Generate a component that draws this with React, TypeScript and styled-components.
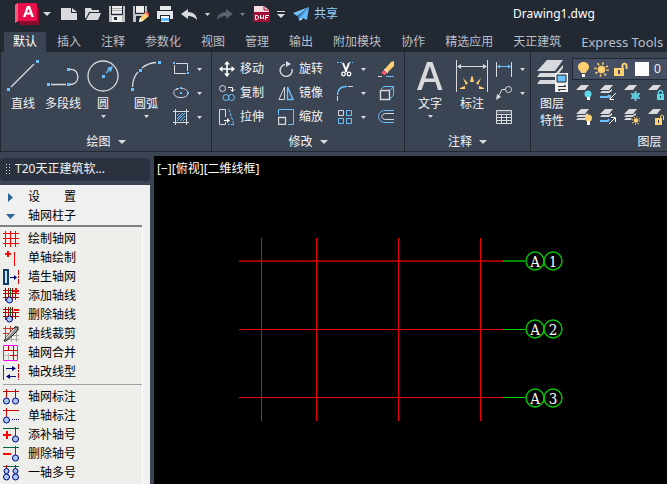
import React from "react";
import styled, { createGlobalStyle } from "styled-components";

const Global = createGlobalStyle`
  * { box-sizing: border-box; }
  body { margin: 0; background: #000; overflow: hidden; }
  body, button, select, input { font-family: "Noto Sans", "Noto Sans CJK SC", sans-serif; font-size: 12px; }
  button { border: 0; background: none; padding: 0; color: inherit; line-height: 16px; white-space: nowrap; }
  svg { display: block; flex: none; }
`;

const INK = "#d9dade";
const BLUE = "#6bc0ff";
const GOLD = "#ffd071";
const CYAN = "#5fd9e8";
const PANEL = "#3b4453";

const Shell = styled.div`
  height: 100vh;
  display: flex;
  flex-direction: column;
  overflow: hidden;
  background: ${PANEL};
`;
const TitleBar = styled.header`
  flex: none;
  height: 28px;
  display: grid;
  grid-template-columns: 513fr 154fr;
  align-items: center;
  background: #222933;
  color: #fff;
`;
const QuickAccess = styled.div`
  display: flex;
  align-items: center;
  padding-left: 15px;
`;
const QuickButton = styled.button<{ $gap?: number }>`
  display: flex;
  align-items: center;
  gap: 4px;
  margin-left: ${(p) => p.$gap ?? 8}px;
`;
const Share = styled(QuickButton)`
  gap: 5px;
  color: #8fd0ff;
`;
const DocTitle = styled.h1`
  margin: 0;
  font-size: 12px;
  font-weight: 400;
  line-height: 16px;
`;
const TabBar = styled.nav`
  flex: none;
  height: 24px;
  display: flex;
  align-items: flex-end;
  padding-left: 4px;
  background: #222933;
  color: #b9bec8;
`;
const Tab = styled.button<{ $active?: boolean; $latin?: boolean }>`
  flex: none;
  height: 20px;
  padding: 0 10px;
  background: ${(p) => (p.$active ? PANEL : "none")};
  color: ${(p) => (p.$active ? "#fff" : "inherit")};
  font-size: ${(p) => (p.$latin ? 13 : 12)}px;
  &:first-child { padding: 0 9px; margin-right: 1px; }
`;
const Ribbon = styled.div`
  flex: none;
  display: flex;
  height: 100px;
  border-left: 1px solid #222933;
  border-bottom: 1px solid #222933;
  background: ${PANEL};
  color: #f2f3f5;
`;
const Panel = styled.section<{ $width: number }>`
  flex: none;
  width: ${(p) => p.$width}px;
  display: flex;
  flex-direction: column;
  padding-top: 5px;
  border-right: 1px solid #222933;
`;
const PanelBody = styled.div<{ $left: number }>`
  flex: 1;
  display: flex;
  align-items: flex-start;
  padding-left: ${(p) => p.$left}px;
`;
const PanelTitle = styled.button`
  height: 18px;
  display: flex;
  align-items: center;
  justify-content: center;
  gap: 7px;
`;
const BigTool = styled.button<{ $width: number }>`
  width: ${(p) => p.$width}px;
  display: flex;
  flex-direction: column;
  align-items: center;
`;
const BigIcon = styled.span`
  height: 38px;
  display: flex;
  align-items: center;
`;
const BigLabel = styled.span`
  line-height: 17px;
`;
const DropRow = styled.span`
  height: 8px;
  display: flex;
  align-items: center;
`;
const ToolGrid = styled.div<{ $cols: string; $start?: number }>`
  display: grid;
  grid-template-columns: ${(p) => p.$cols};
  grid-auto-rows: 24px;
  margin-left: ${(p) => p.$start ?? 0}px;
`;
const SmallTool = styled.button<{ $gap?: number }>`
  display: flex;
  align-items: center;
  gap: ${(p) => p.$gap ?? 5}px;
`;
const LayerArea = styled.div`
  flex: 1;
  padding-top: 1px;
`;
const LayerTools = styled(ToolGrid)`
  padding-top: 1px;
`;
const LayerCombo = styled.button`
  width: 100%;
  height: 22px;
  display: flex;
  align-items: center;
  gap: 5px;
  padding-left: 5px;
  border: 1px solid #222933;
  background: #465064;
`;
const Swatch = styled.span`
  width: 14px;
  height: 14px;
  margin-left: 2px;
  background: #fff;
`;
const Work = styled.main`
  flex: 1;
  min-height: 0;
  display: flex;
  padding-top: 4px;
`;
const Palette = styled.aside`
  flex: none;
  width: 154px;
  display: flex;
  flex-direction: column;
  padding: 2px 4px 0 0;
`;
const PaletteHead = styled.header`
  flex: none;
  display: flex;
  align-items: center;
  gap: 5px;
  height: 23px;
  padding: 0 0 2px 6px;
  border-radius: 4px;
  background: #2b313e;
  color: #f2f3f5;
`;
const PaletteTitle = styled.h2`
  margin: 0;
  font-size: 12px;
  font-weight: 400;
  line-height: 16px;
`;
const PaletteBody = styled.div`
  flex: 1;
  min-height: 0;
  margin-top: 4px;
  padding-top: 2px;
  overflow: hidden;
  background: #f0f0f0;
  color: #000;
`;
const Group = styled.div`
  margin-right: 7px;
  border-right: 1px solid #fff;
  background: #eeeeea;
`;
const Entry = styled.button`
  width: 100%;
  height: 19px;
  display: grid;
  grid-template-columns: 25px 1fr;
  align-items: center;
  padding-left: 3px;
  text-align: left;
`;
const Rule = styled.hr<{ $inset?: boolean }>`
  height: ${(p) => (p.$inset ? 1 : 2)}px;
  margin: ${(p) => (p.$inset ? "3px 0 2px 3px" : "0 8px 2px 0")};
  border: 0;
  background: ${(p) => (p.$inset ? "#a0a0a0" : "#808080")};
`;
const Canvas = styled.section`
  flex: 1;
  min-width: 0;
  overflow: hidden;
  background: #000;
  color: #fff;
`;
const ViewLabel = styled.div`
  padding: 5px 0 0 3px;
  line-height: 16px;
`;
const Drawing = styled.div`
  padding: 59px 0 0 84px;
`;

type IconProps = { w?: number; h?: number; children: React.ReactNode; stroke?: string };
const Icon = ({ w = 16, h = 16, children, stroke = INK }: IconProps) => (
  <svg width={w} height={h} viewBox={`0 0 ${w} ${h}`} fill="none" stroke={stroke} aria-hidden="true">
    {children}
  </svg>
);
const Caret = ({ large, color = INK }: { large?: boolean; color?: string }) =>
  large ? (
    <Icon w={8} h={4} stroke="none"><path d="M0 0H8L4 4Z" fill={color} /></Icon>
  ) : (
    <Icon w={5} h={3} stroke="none"><path d="M0 0H5L2.5 3Z" fill={color} /></Icon>
  );
const Dots = ({ at, r = 3 }: { at: number[][]; r?: number }) => (
  <>{at.map(([x, y]) => <rect key={`${x},${y}`} x={x} y={y} width={r} height={r} fill={BLUE} stroke="none" />)}</>
);

/* Quick access icons */
const Logo = () => (
  <Icon w={24} h={22} stroke="none">
    <path d="M3 17H21V3L24 5V22H4Z" fill="#8a0c2c" />
    <path d="M0 2 3 0H21L22 1V18H3L0 20Z" fill="#e8114b" />
    <path d="M0 2 3 0V18L0 20Z" fill="#fb5b7d" />
    <path fillRule="evenodd" d="M8 14 12 3H15L19 14H16.3L15.5 11.6H11.4L10.6 14ZM12.1 9.5H14.8L13.5 5.5Z" fill="#fff" />
  </Icon>
);
const NewIcon = () => <Icon w={16} h={12} stroke="none"><path d="M0 0H10V5H16V12H0ZM11 0 16 4H11Z" fill={INK} /></Icon>;
const OpenIcon = () => <Icon w={16} h={12} stroke="none"><path d="M0 0H6L7 2H14V4H4L1 10H0ZM5 5H16L13 12H1Z" fill={INK} /></Icon>;
const SaveIcon = () => (
  <Icon stroke="none"><path d="M0 0H16V16H0Z" fill="#bfc1c5" /><path d="M3 0H13V7H3ZM3 10H13V16H3Z" fill="#eee" /><path d="M3 2.5H13M3 4.5H13" stroke="#aaa" /><path d="M2 0H3V8H13V0H14V9H2ZM5 11H8V14H5Z" fill="#222933" /></Icon>
);
const SaveAsIcon = () => (
  <Icon stroke="none"><path d="M0 0H14V8L6 16H0Z" fill="#bfc1c5" /><path d="M3 0H11V6H3Z" fill="#eee" /><path d="M2 0H3V7H11V0H12V8H2ZM3 10H9V12H7V16H3Z" fill="#222933" /><path d="M7 12 12 7 16 10 10 15 6 16Z" fill={GOLD} /><path d="M12 7 14 5 16 8V10Z" fill="#ff5b5b" /><path d="M7 12 10 15 6 16Z" fill="#fff" /></Icon>
);
const PrintIcon = () => (
  <Icon stroke="none"><path d="M3 0H14V4H3ZM0 5H16V13H13V9H3V13H0Z" fill="#e5e7ea" /><path d="M4 10H12V16H4Z" fill="#fff" /><path d="M4 12H12V15H4Z" fill="#55b7ff" /></Icon>
);
const UndoIcon = () => <Icon w={16} h={11} stroke="none"><path d="M0 5 7 0V3C12 3 16 6 16 11C13 8 11 7 7 7V10Z" fill={INK} /></Icon>;
const RedoIcon = () => <Icon w={16} h={11} stroke="none"><path d="M16 5 9 0V3C4 3 0 6 0 11C3 8 5 7 9 7V10Z" fill="#59616c" /></Icon>;
const DwfIcon = () => (
  <Icon w={17} h={16} stroke="none">
    <path d="M1 0H11L16 4V8H1Z" fill="#f5dce1" /><path d="M11 0V4H16" stroke="#a60d34" />
    <path d="M0 6H17V16H0Z" fill="#a60d34" />
    <path d="M2.5 9V13.5H4L5.5 12V10.5L4 9.5H2.5M7.5 9V13L9 11.5L10.5 13V9M12.5 14V9.5H16M12.5 11.5H15" stroke="#fff" />
  </Icon>
);
const Customize = () => <Icon w={8} h={7} stroke="none"><path d="M0 0H8V1H0ZM0 3H8L4 7Z" fill={INK} /></Icon>;
const PlaneIcon = () => (
  <Icon w={16} h={14} stroke="none"><path d="M16 0 0 6 4 9Z" fill="#74c6ff" /><path d="M16 0 5 9 6 14Z" fill="#3d92d8" /><path d="M16 0 8 10 14 13Z" fill="#65bdff" /><path d="M6 14 8 10 10 12Z" fill="#b9e3ff" /></Icon>
);

/* Draw panel icons */
const LineIcon = () => <Icon w={32} h={32}><path d="M4 27 27 4" strokeWidth="1.3" /><Dots at={[[0, 28], [29, 0]]} /></Icon>;
const PolyIcon = () => <Icon w={32} h={32}><path d="M4 24.5H19M23 9.5C33 8 34 25 23 24.5" strokeWidth="1.3" /><Dots at={[[0, 23], [20, 23], [20, 8]]} /></Icon>;
const CircleIcon = () => <Icon w={32} h={32}><circle cx="16" cy="16" r="15" strokeWidth="1.3" /><path d="M19 13 23 9" stroke={BLUE} strokeWidth="1.3" /><path d="M20 8 26 6 24 12Z" fill={BLUE} stroke="none" /><Dots at={[[15, 15]]} /></Icon>;
const ArcIcon = () => <Icon w={32} h={32}><path d="M2.5 27Q3 17 8 12M12 8Q18 3 26 2.5" strokeWidth="1.3" /><Dots at={[[1, 28], [9, 9], [28, 1]]} /></Icon>;
const RectIcon = () => <Icon><path d="M3 2.5H14.5V10M13 12.5H1.5V4" /><Dots at={[[0, 1], [14, 11]]} r={2} /></Icon>;
const EllipseIcon = () => <Icon><path d="M9 3.5C17 4 17 13 8 12.5C-1 13 -1 4 5 3.5M3 4.5 6 3.5" /><Dots at={[[7, 2], [7, 7], [14, 7]]} r={2} /></Icon>;
const HatchIcon = () => <Icon><path d="M2.5 0V16M13.5 0V16M0 2.5H16M0 13.5H16" /><path d="M4 7 7 4M4 10 10 4M4 12 12 4M7 12 12 7M10 12 12 10" stroke={BLUE} /></Icon>;

/* Modify panel icons */
const MoveIcon = () => <Icon><path d="M8 2V14M2 8H14" stroke="#fff" strokeWidth="1.6" /><path d="M8 0 5 3.5H11ZM8 16 5 12.5H11ZM0 8 3.5 5V11ZM16 8 12.5 5V11Z" fill="#fff" stroke="none" /></Icon>;
const RotateIcon = () => <Icon><path d="M7 3.5A6 6 0 1 0 14 8" strokeWidth="1.4" /><path d="M8 0 13 3 8 6Z" fill={INK} stroke="none" /></Icon>;
const TrimIcon = () => <Icon><path d="M0 1.5H6M12 1.5H16" stroke={BLUE} strokeDasharray="2 1" /><path d="M6 2 9.5 11M12 2 8.5 11" stroke="#fff" strokeWidth="2" /><circle cx="6.5" cy="13" r="1.8" stroke="#fff" strokeWidth="1.3" /><circle cx="12" cy="13" r="1.8" stroke="#fff" strokeWidth="1.3" /></Icon>;
const EraseIcon = () => <Icon><path d="M6 9 13 1 16 0V5L9 12Z" fill={GOLD} stroke="none" /><path d="M6 8 10 12" stroke="#fff" /><path d="M6 9 9 12 7 14 3 12Z" fill="#ff5965" stroke="none" /><path d="M0 15.5H4" stroke={INK} /><path d="M8 15.5H16" stroke={BLUE} /></Icon>;
const CopyIcon = () => <Icon><circle cx="3.5" cy="3.5" r="3" /><path d="M9 2.5H13.5V6M11.5 4.5 13.5 6.5 15.5 4.5" stroke="#fff" /><circle cx="7" cy="12.5" r="3" stroke={BLUE} /><circle cx="12.5" cy="12.5" r="3" stroke={BLUE} /></Icon>;
const MirrorIcon = () => <Icon><path d="M6.5 2V14.5H1Z" /><path d="M9.5 2V14.5H15Z" stroke={BLUE} strokeWidth="1.4" /></Icon>;
const FilletIcon = () => <Icon><path d="M.5 10Q1 1 10 1.5" stroke={BLUE} strokeWidth="1.4" /><path d="M11 1.5H16M.5 11V16" /></Icon>;
const BoxIcon = () => <Icon><path d="M3 4 6 1.5H15.5V10L12 14M12 5 15.5 2" stroke={BLUE} /><path d="M2.5 5.5H11.5V14.5H2.5Z" strokeWidth="1.4" /></Icon>;
const StretchIcon = () => <Icon><path d="M6.5 8V.5H.5V15.5H6.5V13" /><path d="M10 .5 15 15.5H9" stroke={BLUE} strokeDasharray="3 1" /><path d="M5 11.5H10" stroke="#fff" /><path d="M8 9 11 11.5 8 14Z" fill="#fff" stroke="none" /></Icon>;
const ScaleIcon = () => <Icon><path d="M.5 6V.5H15.5V15.5H10" stroke={BLUE} /><path d="M.5 8.5H7.5V15.5H.5Z" strokeWidth="1.3" /></Icon>;
const ArrayIcon = () => <Icon><path d="M1.5 1.5H6.5V6.5H1.5Z" /><path d="M9.5 1.5H14.5V6.5H9.5ZM1.5 9.5H6.5V14.5H1.5ZM9.5 9.5H14.5V14.5H9.5Z" stroke={BLUE} /></Icon>;
const OffsetIcon = () => <Icon><path d="M16 1.5H7C-1.5 1.5-1.5 13.5 7 13.5H16" stroke={BLUE} /><path d="M16 4.5H8C2.5 4.5 2.5 10.5 8 10.5H16" /></Icon>;

/* Annotation panel icons */
const TextIcon = () => <Icon w={28} h={30} stroke="none"><path fillRule="evenodd" d="M1 29 11 1H16.5L26.5 29H22L19.5 21H8.5L5.5 29ZM9.5 17.5H18L13.8 5Z" fill={INK} /></Icon>;
const DimIcon = () => <Icon w={32} h={32}><path d="M.5 0V32M31.5 0V32M2 6.5H30" /><path d="M1 6.5 5 4V9ZM31 6.5 27 4V9Z" fill={INK} stroke="none" /><path d="M15.5 16H16.5L18 22H14ZM7 18 12 23 10 25ZM25 18 20 23 22 25ZM4 28 9 26V29H4ZM28 28 23 26V29H28Z" fill={GOLD} stroke="none" /></Icon>;
const LinearIcon = () => <Icon><path d="M.5 1V16M15.5 1V16" /><path d="M2 5.5H14" stroke={BLUE} /><path d="M1 5.5 4 3.5V7.5ZM15 5.5 12 3.5V7.5Z" fill={BLUE} stroke="none" /></Icon>;
const LeaderIcon = () => <Icon><circle cx="12.5" cy="4.5" r="3" /><path d="M9.5 4.5H6L2 12" /><path d="M0 15 1 9 5 12Z" fill={INK} stroke="none" /></Icon>;
const TableIcon = () => <Icon><path d="M.5 1.5H15.5V14.5H.5ZM.5 5.5H15.5M.5 8.5H15.5M.5 11.5H15.5M5.5 5V14M10.5 5V14" /><path d="M1 3H15" stroke="#858b96" /></Icon>;

/* Layer panel icons */
const LayersIcon = () => (
  <Icon w={32} h={32} stroke="none">
    <path d="M11 0H27L19 11H1Z" fill={INK} />
    <path d="M4 13H20L27 5V8L20 17H1Z" fill={INK} />
    <path d="M4 20H19V24H1Z" fill={INK} />
    <path d="M19 13H32V32H19Z" fill="#f1f1f1" /><path d="M21 15H30V22H21Z" fill={BLUE} stroke="#222" />
    <path d="M22 26.5H30M28 25 30 26.5M30 29.5H22L24 31" stroke="#333" fill="none" />
  </Icon>
);
const Bulb = () => <Icon w={11} h={15} stroke="none"><path d="M5.5 0C9 0 11 2.5 11 5C11 8 8 9 8 11H3C3 9 0 8 0 5C0 2.5 2 0 5.5 0Z" fill={GOLD} /><path d="M4 12H7V15H4Z" fill="#fff" /></Icon>;
const Rays = ({ x, y, r, color }: { x: number; y: number; r: number; color: string }) => (
  <>
    <circle cx={x} cy={y} r={r * 0.5} fill={color} stroke="none" />
    <circle cx={x} cy={y} r={r * 0.8} stroke={color} strokeWidth={r * 0.35} strokeDasharray={`${r * 0.2} ${r * 0.428}`} />
  </>
);
const Sun = () => <Icon w={15} h={15}><Rays x={7.5} y={7.5} r={7.5} color={GOLD} /></Icon>;
const Unlock = () => <Icon w={14} h={14} stroke="none"><path d="M0 6H10V14H0Z" fill={GOLD} /><path d="M8.5 7V3Q10.5 0 12.5 3V7" stroke={GOLD} strokeWidth="2" fill="none" /><path d="M4 8H6V12H4Z" fill="#465064" /></Icon>;
const Sheet = ({ count = 1 }: { count?: number }) => (
  <>{Array.from({ length: count }, (_, i) => <path key={i} d={i ? `M2 ${3 + i * 3}H9L12 ${1 + i * 3}V${3 + i * 3}L9 ${5 + i * 3}H0Z` : "M5 0H13L9 5H0Z"} fill={INK} stroke="none" />)}</>
);
const LayerOff = () => <Icon><Sheet /><circle cx="12" cy="9" r="3.5" fill={CYAN} stroke="none" /><path d="M11 12H14V15H11Z" fill="#fff" stroke="none" /></Icon>;
const LayerIso = () => <Icon><Sheet count={2} /><path d="M0 12H8L9 10" stroke={BLUE} strokeWidth="2" /><path d="M16 8 10 14M10 10V14.5H14" stroke="#fff" /></Icon>;
const LayerFreeze = () => <Icon><Sheet /><path d="M11.5 6V16M7 8.5 16 13.5M7 13.5 16 8.5" stroke={CYAN} strokeWidth="1.5" /><circle cx="11.5" cy="11" r="3" stroke={CYAN} /></Icon>;
const LayerLock = () => <Icon><Sheet /><path d="M9 9H16V15H9Z" fill={CYAN} stroke="none" /><path d="M10.5 9V7Q12.5 4 14.5 7V9" stroke={CYAN} strokeWidth="1.4" /><path d="M12.5 11V13" stroke={PANEL} /></Icon>;
const LayerOn = () => <Icon><Sheet count={3} /><circle cx="12.5" cy="9" r="3.5" fill={GOLD} stroke="none" /><path d="M11 12H14V16H11Z" fill="#fff" stroke="none" /></Icon>;
const LayerUniso = () => <Icon><Sheet count={2} /><path d="M0 12H8L9 10" stroke={BLUE} strokeWidth="2" /><path d="M9 15 15 9M11 8.5H15.5V13" stroke="#fff" /></Icon>;
const LayerThaw = () => <Icon><Sheet count={3} /><circle cx="12" cy="11.5" r="5" fill={PANEL} stroke="none" /><Rays x={12} y={11.5} r={4.5} color={GOLD} /></Icon>;
const LayerUnlock = () => <Icon><Sheet /><path d="M7 9H14V16H7Z" fill={GOLD} stroke="none" /><path d="M12.5 9V7Q14 5 15.5 7V11" stroke={GOLD} /><path d="M10.5 11V14" stroke={PANEL} /></Icon>;

/* Palette icons */
const RED = "#cc0000";
const NAVY = "#000080";
const Bubble = ({ x, y, r = 3 }: { x: number; y: number; r?: number }) => <circle cx={x} cy={y} r={r} fill="#a6caf0" stroke={NAVY} />;
const GripIcon = () => <Icon w={4} h={10} stroke="none"><path d="M0 0H1V1H0ZM3 0H4V1H3ZM0 3H1V4H0ZM3 3H4V4H3ZM0 6H1V7H0ZM3 6H4V7H3ZM0 9H1V10H0ZM3 9H4V10H3Z" fill="#d5d7db" /></Icon>;
const ClosedIcon = () => <Icon stroke="none"><path d="M5 4 10 8.5 5 13Z" fill="#2b6496" /></Icon>;
const OpenedIcon = () => <Icon stroke="none"><path d="M3 6H12L7.5 11Z" fill="#2b6496" /></Icon>;
const GridIcon = () => <Icon stroke="#f00"><path d="M2.5 0V16M7.5 0V16M12.5 0V16M0 2.5H16M0 7.5H16M0 12.5H16" /></Icon>;
const SingleIcon = () => <Icon stroke="#f00"><path d="M2 4H8M5 1V7" strokeWidth="2" /><path d="M11.5 2V16" /></Icon>;
const WallIcon = () => <Icon><path d="M1 1H5V15H1Z" fill="#c5e6f5" stroke="#103d68" strokeWidth="2" /><path d="M7 8.5H12" stroke={NAVY} /><path d="M11 6 14 8.5 11 11Z" fill={NAVY} stroke="none" /><path d="M15.5 1V16" stroke={RED} strokeDasharray="5 1 2 1" /></Icon>;
const EditGrid = ({ add }: { add?: boolean }) => <Icon stroke="#b00000"><path d="M2.5 0V13M5.5 0V12M9.5 0V12M12.5 6V12M0 2.5H10M0 5.5H16M0 9.5H16" /><path d="M7.5 0V9" stroke="#063" /><path d={add ? "M10 3H16M13 0V6" : "M11 3H16"} stroke="#f00" strokeWidth="2" /><Bubble x={6.5} y={12} /></Icon>;
const ClipIcon = () => (
  <Icon stroke="#c32">
    <path d="M2.5 0V12M7.5 0V8M0 2.5H14M0 7.5H8M12.5 0V4" />
    <path d="M8.5 9V16M13.5 6V16M8 9.5H16M5 13.5H16" stroke="#aaa" />
    <path d="M1 15 5 9 12 1H15V4L9 10 3 15Z" stroke="#111" fill="#999" />
    <path d="M3 12 11 3" stroke="#fff" />
  </Icon>
);
const MergeIcon = () => <Icon stroke={RED}><path d="M5.5 8V15M1 10.5H8" stroke="#bbb" /><path d="M5.5 1V6M10.5 1V15M1 5.5H14M7 10.5H14" /><path d="M.5 .5H14.5V15.5H.5Z" stroke="#f0f" /></Icon>;
const TypeIcon = () => <Icon stroke={NAVY}><path d="M3 4.5H10M6 12.5H13" /><path d="M9 2 13 4.5 9 7ZM7 10 3 12.5 7 15Z" fill={NAVY} stroke="none" /><path d="M.5 1V16" stroke={RED} /><path d="M15.5 0V16" stroke={RED} strokeDasharray="5 1 2 1" /></Icon>;
const MarkIcon = () => <Icon stroke={RED}><path d="M0 2.5H16M3.5 0V9M12.5 0V9" /><Bubble x={3.5} y={12} /><Bubble x={12.5} y={12} /></Icon>;
const MarkOneIcon = () => <Icon stroke={RED}><path d="M0 2.5H16M3.5 0V9" /><Bubble x={3.5} y={12} /><path d="M9 11.5H16" stroke={NAVY} strokeDasharray="1 1" /></Icon>;
const MarkEdit = ({ add }: { add?: boolean }) => <Icon stroke={RED}><path d="M0 1.5H16" stroke="#064" /><path d="M12.5 0V9" /><path d={add ? "M0 8H8M4 4V12" : "M0 8H8"} stroke="#f00" strokeWidth="2" /><Bubble x={12.5} y={12} /></Icon>;
const MultiIcon = () => <Icon stroke={RED}><path d="M0 1.5H16" stroke="#064" /><path d="M3.5 0V4M12.5 0V4" /><Bubble x={3.5} y={6} r={2.5} /><Bubble x={12.5} y={6} r={2.5} /><Bubble x={3.5} y={12} /><Bubble x={12.5} y={12} /></Icon>;

const tabs = ["默认", "插入", "注释", "参数化", "视图", "管理", "输出", "附加模块", "协作", "精选应用", "天正建筑", "Express Tools"];
const gridEntries: [string, React.ReactNode][] = [
  ["绘制轴网", <GridIcon />], ["单轴绘制", <SingleIcon />], ["墙生轴网", <WallIcon />], ["添加轴线", <EditGrid add />],
  ["删除轴线", <EditGrid />], ["轴线裁剪", <ClipIcon />], ["轴网合并", <MergeIcon />], ["轴改线型", <TypeIcon />],
];
const markEntries: [string, React.ReactNode][] = [
  ["轴网标注", <MarkIcon />], ["单轴标注", <MarkOneIcon />], ["添补轴号", <MarkEdit add />],
  ["删除轴号", <MarkEdit />], ["一轴多号", <MultiIcon />],
];
const layerTools: [string, React.ReactNode][] = [
  ["关闭图层", <LayerOff />], ["隔离", <LayerIso />], ["冻结", <LayerFreeze />], ["锁定", <LayerLock />],
  ["打开图层", <LayerOn />], ["取消隔离", <LayerUniso />], ["解冻", <LayerThaw />], ["解锁", <LayerUnlock />],
];

type BigProps = { icon: React.ReactNode; lines: string[]; width: number; drop?: boolean };
const Big = ({ icon, lines, width, drop }: BigProps) => (
  <BigTool $width={width}>
    <BigIcon>{icon}</BigIcon>
    {lines.map((line) => <BigLabel key={line}>{line}</BigLabel>)}
    {drop && <DropRow><Caret /></DropRow>}
  </BigTool>
);
const Small = ({ icon, name, drop, label }: { icon: React.ReactNode; name: string; drop?: boolean; label?: boolean }) => (
  <SmallTool aria-label={name} $gap={drop ? 8 : 5}>{icon}{label && name}{drop && <Caret />}</SmallTool>
);
const Entries = ({ items }: { items: [string, React.ReactNode][] }) => (
  <>{items.map(([name, icon]) => <Entry key={name}>{icon}{name}</Entry>)}</>
);

const GridDrawing = () => (
  <svg width="326" height="186" viewBox="0 0 326 186" fill="none" role="img" aria-label="轴网">
    <g stroke="none" shapeRendering="crispEdges">
      <path d="M1 24H265V26H1Z" fill="#990000" />
      <path d="M1 93H265V94H1ZM1 161H265V162H1ZM23 2H24V185H23ZM78 2H79V185H78ZM160 2H161V185H160ZM242 2H243V185H242Z" fill="#f00000" />
      <path d="M265 24H287V26H265Z" fill="#008c00" />
      <path d="M265 93H287V94H265ZM265 161H287V162H265Z" fill="#00d800" />
    </g>
    {[25, 93, 162].map((y, i) => (
      <g key={y}>
        <circle cx="297" cy={y} r="9" stroke="#00c800" strokeWidth="1.4" />
        <circle cx="315" cy={y} r="9" stroke="#00c800" strokeWidth="1.4" />
        <g fill="#fff" fontFamily="DejaVu Serif Condensed, DejaVu Serif, serif" fontSize="15" textAnchor="middle">
          <text x="297" y={y + 6}>A</text>
          <text x="315" y={y + 6}>{i + 1}</text>
        </g>
      </g>
    ))}
  </svg>
);

export default function App() {
  return (
    <Shell>
      <Global />
      <TitleBar>
        <QuickAccess>
          <QuickButton $gap={0} aria-label="应用程序菜单"><Logo /><Caret large /></QuickButton>
          <QuickButton $gap={10} aria-label="新建"><NewIcon /></QuickButton>
          <QuickButton aria-label="打开"><OpenIcon /></QuickButton>
          <QuickButton aria-label="保存"><SaveIcon /></QuickButton>
          <QuickButton aria-label="另存为"><SaveAsIcon /></QuickButton>
          <QuickButton aria-label="打印"><PrintIcon /></QuickButton>
          <QuickButton aria-label="放弃"><UndoIcon /></QuickButton>
          <QuickButton aria-label="放弃列表"><Caret /></QuickButton>
          <QuickButton $gap={7} aria-label="重做"><RedoIcon /></QuickButton>
          <QuickButton $gap={7} aria-label="重做列表"><Caret color="#7b818a" /></QuickButton>
          <QuickButton aria-label="DWF"><DwfIcon /></QuickButton>
          <QuickButton $gap={7} aria-label="自定义"><Customize /></QuickButton>
          <Share><PlaneIcon />共享</Share>
        </QuickAccess>
        <DocTitle>Drawing1.dwg</DocTitle>
      </TitleBar>
      <TabBar>{tabs.map((t, i) => <Tab key={t} $active={i === 0} $latin={/^[A-Z]/.test(t)}>{t}</Tab>)}</TabBar>
      <Ribbon>
        <Panel $width={211}>
          <PanelBody $left={2}>
            <Big width={40} icon={<LineIcon />} lines={["直线"]} />
            <Big width={40} icon={<PolyIcon />} lines={["多段线"]} />
            <Big width={40} icon={<CircleIcon />} lines={["圆"]} drop />
            <Big width={46} icon={<ArcIcon />} lines={["圆弧"]} drop />
            <ToolGrid $cols="29px" $start={4}>
              <Small icon={<RectIcon />} name="矩形" drop />
              <Small icon={<EllipseIcon />} name="椭圆" drop />
              <Small icon={<HatchIcon />} name="图案填充" drop />
            </ToolGrid>
          </PanelBody>
          <PanelTitle>绘图<Caret large /></PanelTitle>
        </Panel>
        <Panel $width={193}>
          <PanelBody $left={7}>
            <ToolGrid $cols="59px 59px 41px 16px">
              <Small icon={<MoveIcon />} name="移动" label />
              <Small icon={<RotateIcon />} name="旋转" label />
              <Small icon={<TrimIcon />} name="修剪" drop />
              <Small icon={<EraseIcon />} name="删除" />
              <Small icon={<CopyIcon />} name="复制" label />
              <Small icon={<MirrorIcon />} name="镜像" label />
              <Small icon={<FilletIcon />} name="圆角" drop />
              <Small icon={<BoxIcon />} name="分解" />
              <Small icon={<StretchIcon />} name="拉伸" label />
              <Small icon={<ScaleIcon />} name="缩放" label />
              <Small icon={<ArrayIcon />} name="阵列" drop />
              <Small icon={<OffsetIcon />} name="偏移" />
            </ToolGrid>
          </PanelBody>
          <PanelTitle>修改<Caret large /></PanelTitle>
        </Panel>
        <Panel $width={126}>
          <PanelBody $left={4}>
            <Big width={42} icon={<TextIcon />} lines={["文字"]} drop />
            <Big width={42} icon={<DimIcon />} lines={["标注"]} />
            <ToolGrid $cols="29px" $start={3}>
              <Small icon={<LinearIcon />} name="线性" drop />
              <Small icon={<LeaderIcon />} name="引线" drop />
              <Small icon={<TableIcon />} name="表格" />
            </ToolGrid>
          </PanelBody>
          <PanelTitle>注释<Caret large /></PanelTitle>
        </Panel>
        <Panel $width={253}>
          <PanelBody $left={1}>
            <Big width={40} icon={<LayersIcon />} lines={["图层", "特性"]} />
            <LayerArea>
              <LayerCombo aria-label="图层 0"><Bulb /><Sun /><Unlock /><Swatch />0</LayerCombo>
              <LayerTools $cols="repeat(4, 24px)" $start={4}>
                {layerTools.map(([name, icon]) => <Small key={name} name={name} icon={icon} />)}
              </LayerTools>
            </LayerArea>
          </PanelBody>
          <PanelTitle>图层<Caret large /></PanelTitle>
        </Panel>
      </Ribbon>
      <Work>
        <Palette>
          <PaletteHead><GripIcon /><PaletteTitle>T20天正建筑软...</PaletteTitle></PaletteHead>
          <PaletteBody>
            <Entry><ClosedIcon />设　　置</Entry>
            <Entry><OpenedIcon />轴网柱子</Entry>
            <Rule />
            <Group>
              <Entries items={gridEntries} />
              <Rule $inset />
              <Entries items={markEntries} />
              <Entry aria-label="更多"><MarkIcon /></Entry>
            </Group>
          </PaletteBody>
        </Palette>
        <Canvas>
          <ViewLabel>[−][俯视][二维线框]</ViewLabel>
          <Drawing><GridDrawing /></Drawing>
        </Canvas>
      </Work>
    </Shell>
  );
}
